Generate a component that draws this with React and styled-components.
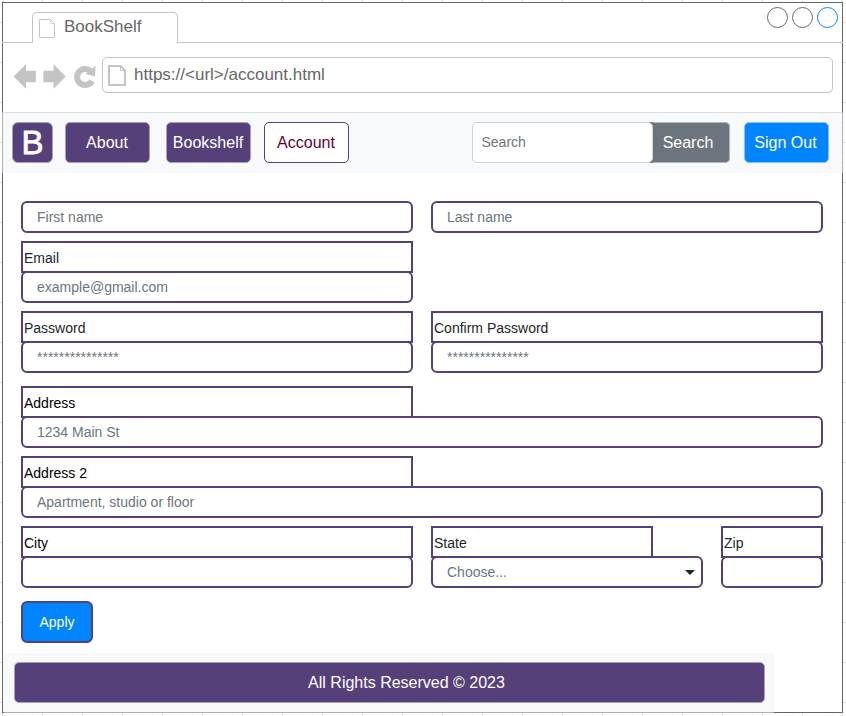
import React from "react";
import styled, { createGlobalStyle, css } from "styled-components";

const purple = "#55407a";
const blue = "#0085ff";
const chrome = "#c4c4c4";

const GlobalStyle = createGlobalStyle`
  * { box-sizing: border-box; }
  body {
    margin: 0;
    overflow: hidden;
    font-family: "Liberation Sans", Arial, sans-serif;
    background: #fff;
  }
  input, button, select { font-family: inherit; margin: 0; outline: none; }
`;

const Canvas = styled.div`
  height: 716px;
  padding: 2px 0 0 2px;
  background-color: #fff;
  background-image:
    linear-gradient(90deg, #e0e0e0 1px, transparent 1px),
    linear-gradient(#e0e0e0 1px, transparent 1px),
    linear-gradient(90deg, #f9f9f9 1px, transparent 1px),
    linear-gradient(#f9f9f9 1px, transparent 1px);
  background-size: 40px 40px, 40px 40px, 10px 10px, 10px 10px;
  background-position: 2px 22px, 2px 22px, 2px 2px, 2px 2px;
`;

const Window = styled.div`
  display: flex;
  flex-direction: column;
  width: 841px;
  height: 711px;
  border: 1px solid #666;
  background: #fff;
`;

const TabStrip = styled.div`
  display: flex;
  align-items: flex-end;
  flex: none;
  height: 40px;
  margin: 0 -1px;
  padding: 0 5px 0 30px;
  background: linear-gradient(${chrome}, ${chrome}) bottom / 100% 1px no-repeat;
`;

const Tab = styled.div`
  display: flex;
  width: 146px;
  height: 31px;
  padding: 6px 0 0 6px;
  border: 1px solid ${chrome};
  border-bottom: 0;
  border-radius: 5px 5px 0 0;
  background: #fff;
  color: #666;
  font-size: 17px;
  line-height: 18px;
  gap: 9px;
  svg { flex: none; }
  span { margin-top: -1px; }
`;

const WindowButtons = styled.div`
  display: flex;
  gap: 4px;
  margin-left: auto;
  align-self: flex-start;
  padding-top: 4px;
`;

const WindowButton = styled.span`
  width: 21px;
  height: 21px;
  border: 1px solid ${(p) => (p.$active ? "#0085ff" : "#666")};
  border-radius: 50%;
`;

const AddressRow = styled.div`
  display: flex;
  flex: none;
  height: 69px;
  padding: 14px 9px 0 10px;
`;

const NavIcons = styled.svg`
  flex: none;
  width: 89px;
  height: 36px;
`;

const UrlBar = styled.div`
  display: flex;
  flex: 1;
  height: 36px;
  padding: 7px 0 0 5px;
  border: 1px solid ${chrome};
  border-radius: 5px;
  color: #666;
  font-size: 17px;
  line-height: 20px;
  gap: 8px;
`;

const Navbar = styled.nav`
  display: flex;
  flex: none;
  height: 61px;
  margin: 0 -1px;
  padding: 9px 13.5px 0 9px;
  border: solid #adaeaf;
  border-width: 0 1px;
  background: linear-gradient(#dddee0, #dddee0) top / 100% 1px no-repeat, #f8f9fb;
`;

const Logo = styled.div`
  width: 41px;
  height: 41px;
  margin: 1px 12px 0 0;
  border: 1px solid #aa9ebe;
  border-radius: 6px;
  background: ${purple};
  color: #fff;
  font-size: 33px;
  -webkit-text-stroke: 0.8px #fff;
  line-height: 40px;
  text-align: center;
`;

const NavButton = styled.button`
  width: 85px;
  height: 41px;
  margin: 1px ${(p) => p.$gap || 0}px 0 0;
  padding: 0 1px 0 0;
  border: 1px solid #aa9ebe;
  border-radius: 5px;
  background: ${purple};
  color: #fff;
  font-size: 16px;
  line-height: 39px;
  white-space: nowrap;
  ${(p) =>
    p.$kind === "outline" &&
    css`
      border-color: ${purple};
      background: #fff;
      color: #660033;
    `}
  ${(p) =>
    p.$kind === "primary" &&
    css`
      border-color: #80c2fd;
      background: ${blue};
    `}
`;

const SearchGroup = styled.div`
  display: flex;
  width: 258px;
  height: 41px;
  margin: 1px 14px 0 auto;
  border-radius: 5px;
  background: linear-gradient(90deg, transparent 175px, #6c757d 175px);
`;

const SearchInput = styled.input`
  width: 181px;
  height: 41px;
  padding: 0 9px 1px;
  border: 1px solid #ced4da;
  border-radius: 5px;
  background: #fff;
  font-size: 14px;
  &::placeholder { color: #6c757d; opacity: 1; }
`;

const SearchButton = styled.button`
  flex: 1;
  padding: 1px 5px 0 0;
  border: 1px solid #b3b8bc;
  border-left: 0;
  border-radius: 0 5px 5px 0;
  background: #6c757d;
  color: #fff;
  font-size: 16px;
`;

const Form = styled.div`
  flex: none;
  height: 480px;
  padding: 28px 18px 0;
`;

const Row = styled.div`
  display: flex;
  gap: 18px;
  margin-bottom: ${(p) => p.$after || 8}px;
`;

const Field = styled.div`
  display: flex;
  flex-direction: column;
  width: ${(p) => p.$width || 392}px;
`;

const Label = styled.label`
  width: ${(p) => (p.$width ? `${p.$width}px` : "100%")};
  height: 32px;
  margin-bottom: -2px;
  padding: 2px 1px 0;
  border: 2px solid ${purple};
  color: ${(p) => (p.$strong ? "#000" : "#212529")};
  font-size: 14px;
  line-height: 27px;
`;

const control = css`
  width: 100%;
  height: 32px;
  padding: 0 14px 1px;
  border: 2px solid ${purple};
  border-radius: 6px;
  background: #fff;
  color: #6c757d;
  font-size: 14px;
`;

const Input = styled.input`
  ${control}
  &::placeholder { color: #6c757d; opacity: 1; }
`;

const Select = styled.div`
  ${control}
  display: flex;
  align-items: center;
  justify-content: space-between;
  padding-right: 6px;
  svg { margin-top: 2px; }
`;

const ApplyButton = styled.button`
  width: 72px;
  height: 42px;
  padding: 0;
  border: 2px solid ${purple};
  border-radius: 6px;
  background: ${blue};
  color: #fff;
  font-size: 14px;
`;

const Footer = styled.footer`
  width: 770px;
  height: 60px;
  margin: 0 0 -1px 1px;
  padding: 9px 10px;
  border-bottom: 1px solid #adaeaf;
  background: #f8f9fb;
`;

const FooterBar = styled.div`
  height: 41px;
  width: 751px;
  border: 1px solid #aa9ebe;
  border-radius: 5px;
  background: ${purple};
  color: #fff;
  font-size: 16px;
  line-height: 40px;
  padding-left: 34px;
  text-align: center;
`;

const PageIcon = ({ strong }) => (
  <svg
    width={strong ? 18 : 16}
    height={strong ? 21 : 19}
    viewBox={strong ? "0 0 18 21" : "0 0 16 19"}
    fill="none"
    stroke={chrome}
    strokeWidth={strong ? 2 : 1}
  >
    <path d={strong ? "M1 1h11.5L17 5.5V20H1z" : "M.5.5h11l4 4v14H.5z"} />
    <path d={strong ? "M12.5 1v4.5H17" : "M11.5.5v4h4"} strokeWidth={strong ? 1 : 0.6} />
  </svg>
);

function LabeledInput({ label, placeholder, width, labelWidth, strong }) {
  return (
    <Field $width={width}>
      {label && <Label $width={labelWidth} $strong={strong}>{label}</Label>}
      <Input placeholder={placeholder} aria-label={label || placeholder} />
    </Field>
  );
}

export default function App() {
  return (
    <Canvas>
      <GlobalStyle />
      <Window>
        <TabStrip>
          <Tab><PageIcon /><span>BookShelf</span></Tab>
          <WindowButtons>
            <WindowButton />
            <WindowButton />
            <WindowButton $active />
          </WindowButtons>
        </TabStrip>
        <AddressRow>
          <NavIcons viewBox="0 0 89 36" fill={chrome}>
            <path d="M.5 19.5 13 7.3v6.4h9.8v11.6H13v6.4z" />
            <path d="M52.8 19.5 40.6 7.3v6.4H30.4v11.6h10.2v6.4z" />
            <path d="M77.6 14.2A8 8 0 1 0 79 24" fill="none" stroke={chrome} strokeWidth="6" />
            <path d="M82.6 8.8 82 19.6 72.4 16.8z" />
          </NavIcons>
          <UrlBar><PageIcon strong /><span>https://&lt;url&gt;/account.html</span></UrlBar>
        </AddressRow>
        <Navbar>
          <Logo>B</Logo>
          <NavButton $gap={16}>About</NavButton>
          <NavButton $gap={13}>Bookshelf</NavButton>
          <NavButton $kind="outline">Account</NavButton>
          <SearchGroup>
            <SearchInput placeholder="Search" />
            <SearchButton>Search</SearchButton>
          </SearchGroup>
          <NavButton $kind="primary">Sign Out</NavButton>
        </Navbar>
        <Form>
          <Row>
            <LabeledInput placeholder="First name" />
            <LabeledInput placeholder="Last name" />
          </Row>
          <Row>
            <LabeledInput label="Email" placeholder="example@gmail.com" />
          </Row>
          <Row $after={13}>
            <LabeledInput label="Password" placeholder="***************" />
            <LabeledInput label="Confirm Password" placeholder="***************" />
          </Row>
          <Row>
            <LabeledInput label="Address" placeholder="1234 Main St" width={802} labelWidth={392} strong />
          </Row>
          <Row>
            <LabeledInput label="Address 2" placeholder="Apartment, studio or floor" width={802} labelWidth={392} strong />
          </Row>
          <Row $after={13}>
            <LabeledInput label="City" strong />
            <Field $width={272}>
              <Label $width={222}>State</Label>
              <Select>
                Choose...
                <svg width="10" height="5" viewBox="0 0 10 5"><path d="M0 0h10L5 5z" fill="#212529" /></svg>
              </Select>
            </Field>
            <LabeledInput label="Zip" width={102} />
          </Row>
          <ApplyButton>Apply</ApplyButton>
        </Form>
        <Footer>
          <FooterBar>All Rights Reserved © 2023</FooterBar>
        </Footer>
      </Window>
    </Canvas>
  );
}
